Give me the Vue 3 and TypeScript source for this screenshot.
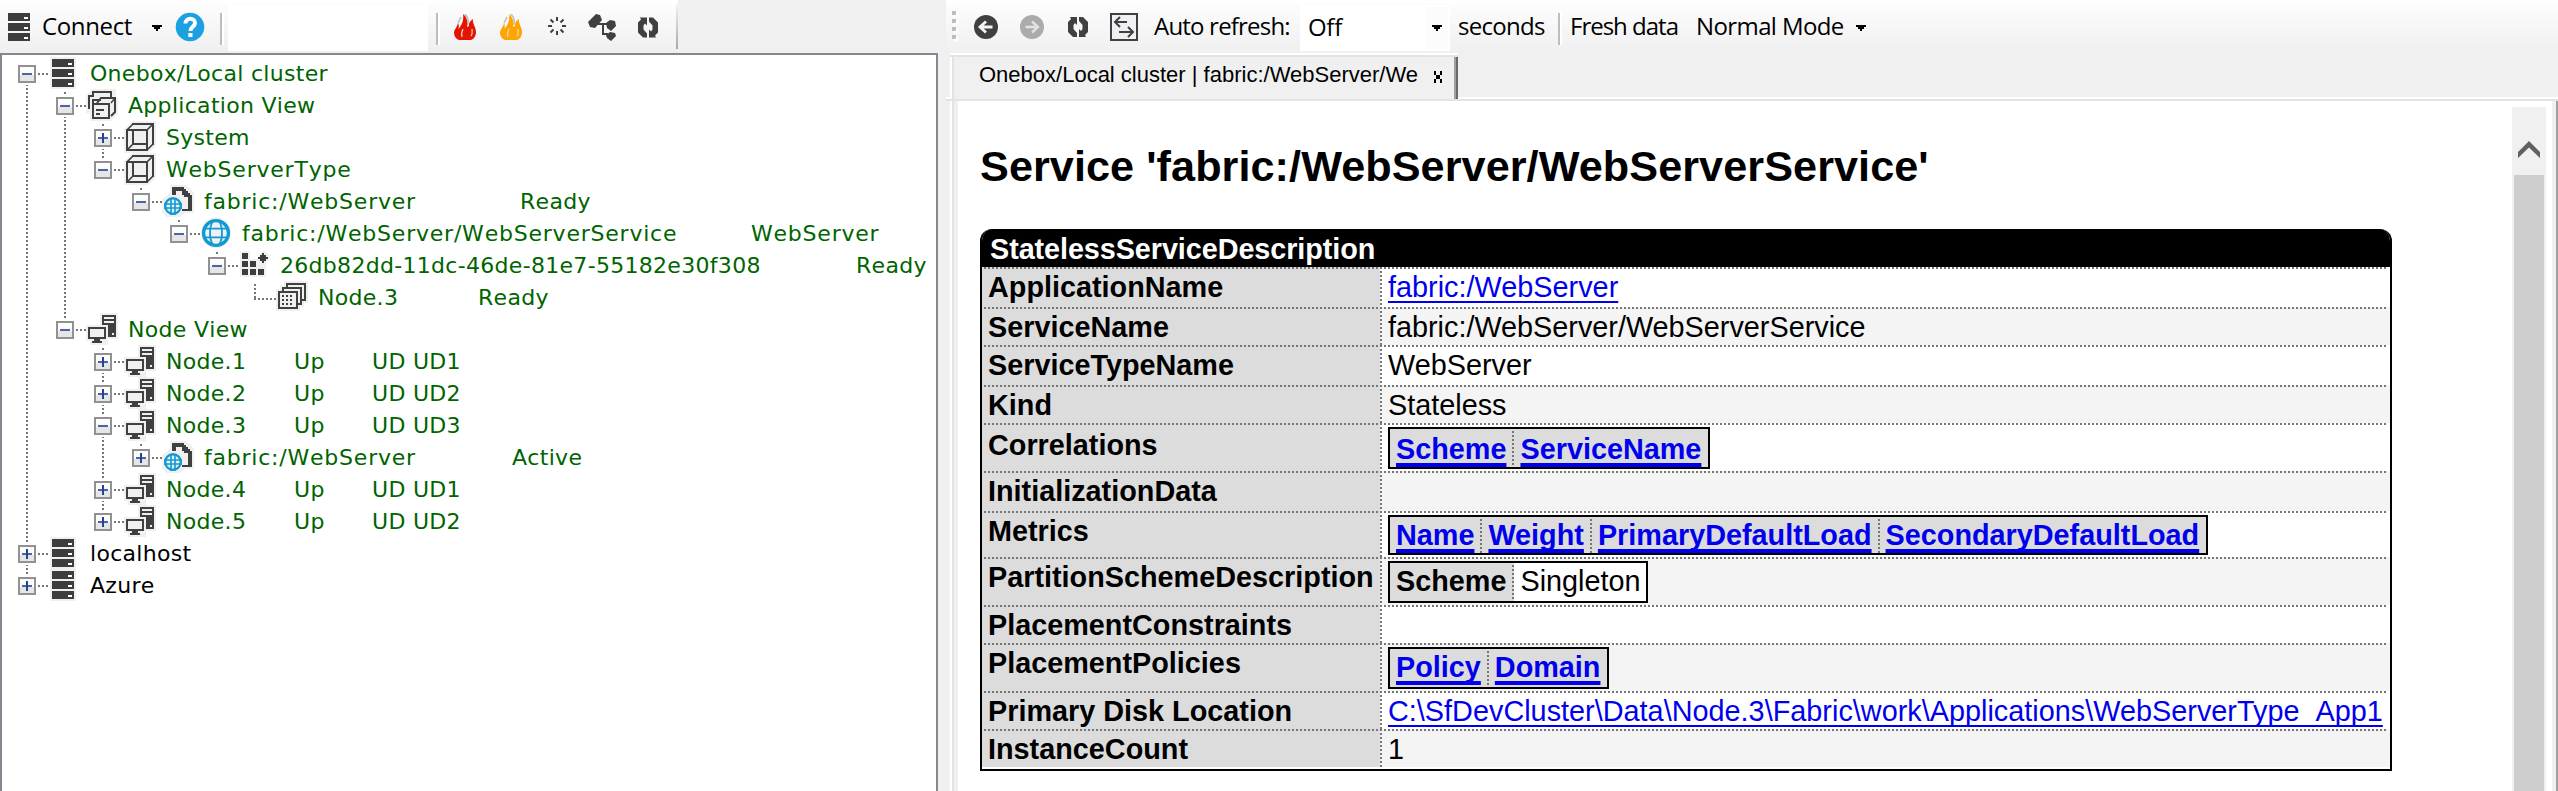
<script setup lang="ts">
type IconName = 'server' | 'apps' | 'cube' | 'doc' | 'globe' | 'partition' | 'stack' | 'pc'

interface TreeItem {
  level: number
  icon: IconName
  label: string
  box: '' | '+' | '-'
  plain?: boolean
  // text columns that follow the label, with their left edge in the panel
  cols?: { x: number; text: string }[]
}

const node = (n: number, ud: number, box: '+' | '-' = '+'): TreeItem => ({
  level: 2, icon: 'pc', label: `Node.${n}`, box,
  cols: [{ x: 294, text: 'Up' }, { x: 372, text: `UD UD${ud}` }],
})

const items: TreeItem[] = [
  { level: 0, icon: 'server', label: 'Onebox/Local cluster', box: '-' },
  { level: 1, icon: 'apps', label: 'Application View', box: '-' },
  { level: 2, icon: 'cube', label: 'System', box: '+' },
  { level: 2, icon: 'cube', label: 'WebServerType', box: '-' },
  { level: 3, icon: 'doc', label: 'fabric:/WebServer', box: '-', cols: [{ x: 520, text: 'Ready' }] },
  { level: 4, icon: 'globe', label: 'fabric:/WebServer/WebServerService', box: '-', cols: [{ x: 751, text: 'WebServer' }] },
  { level: 5, icon: 'partition', label: '26db82dd-11dc-46de-81e7-55182e30f308', box: '-', cols: [{ x: 856, text: 'Ready' }] },
  { level: 6, icon: 'stack', label: 'Node.3', box: '', cols: [{ x: 478, text: 'Ready' }] },
  { level: 1, icon: 'pc', label: 'Node View', box: '-' },
  node(1, 1), node(2, 2), node(3, 3, '-'),
  { level: 3, icon: 'doc', label: 'fabric:/WebServer', box: '+', cols: [{ x: 512, text: 'Active' }] },
  node(4, 1), node(5, 2),
  { level: 0, icon: 'server', label: 'localhost', box: '+', plain: true },
  { level: 0, icon: 'server', label: 'Azure', box: '+', plain: true },
]

function hasNext(index: number, level: number): boolean {
  for (let i = index + 1; i < items.length; i++) {
    if (items[i].level < level) return false
    if (items[i].level === level) return true
  }
  return false
}

// names in the WebServer family are set slightly looser
const isWide = (text: string): boolean => text.includes('WebServer')

const rows = items.map((item, i) => ({
  ...item,
  guides: Array.from({ length: item.level }, (_, k) => hasNext(i, k)),
  up: i > 0,
  down: hasNext(i, item.level),
  parts: (item.cols ?? []).map((c, n, all) => ({
    text: c.text,
    width: c.x - (n === 0 ? 90 + 38 * item.level : all[n - 1].x),
  })),
}))

interface Prop {
  name: string
  height: number
  text?: string
  link?: boolean
  heads?: string[]
  linked?: boolean
  value?: string
  inner?: string
}

const props: Prop[] = [
  { name: 'ApplicationName', height: 40, text: 'fabric:/WebServer', link: true },
  { name: 'ServiceName', height: 38, text: 'fabric:/WebServer/WebServerService' },
  { name: 'ServiceTypeName', height: 40, text: 'WebServer' },
  { name: 'Kind', height: 38, text: 'Stateless' },
  { name: 'Correlations', height: 48, heads: ['Scheme', 'ServiceName'], linked: true, inner: 'tall low' },
  { name: 'InitializationData', height: 40 },
  { name: 'Metrics', height: 46, heads: ['Name', 'Weight', 'PrimaryDefaultLoad', 'SecondaryDefaultLoad'], linked: true, inner: 'short' },
  { name: 'PartitionSchemeDescription', height: 48, heads: ['Scheme'], value: 'Singleton', inner: 'tall' },
  { name: 'PlacementConstraints', height: 38 },
  { name: 'PlacementPolicies', height: 48, heads: ['Policy', 'Domain'], linked: true, inner: 'tall pol' },
  { name: 'Primary Disk Location', height: 38, text: 'C:\\SfDevCluster\\Data\\Node.3\\Fabric\\work\\Applications\\WebServerType_App1', link: true },
  { name: 'InstanceCount', height: 38, text: '1' },
]
</script>

<template>
  <div class="app">
    <section class="left">
      <div class="toolbar left-bar">
        <svg class="i-server" width="22" height="28" viewBox="0 0 11 14" shape-rendering="crispEdges">
          <path fill="#3d3d3d" d="M0 0h11v4H0zM0 5h11v4H0zM0 10h11v4H0z" />
          <path fill="#fff" d="M8 2h2v1H8zM8 7h2v1H8zM8 12h2v1H8z" />
        </svg>
        <span class="t connect">Connect</span>
        <svg class="caret c1" width="10" height="6" viewBox="0 0 5 3"><path d="M0 0h5v1H4v1H3v1H2V2H1V1H0z" /></svg>
        <svg class="help" width="30" height="30" viewBox="0 0 30 30">
          <circle cx="15" cy="15" r="14.3" fill="#1ba1e2" />
          <path d="M10.5 11.5C10.5 5 20 5.500 20 11c0 3.500-4.500 3.500-4.500 8" fill="none" stroke="#fff" stroke-width="4" />
          <rect x="13.300" y="21" width="4.200" height="4" fill="#fff" />
        </svg>
        <i class="sep s1"></i>
        <div class="field"></div>
        <i class="sep s2"></i>
        <svg v-for="c in ['#e51400', '#ffa500']" :key="c" class="flame" width="22" height="26" viewBox="0 0 22 26">
          <path d="M11 0c3 3 4 7 2.500 11M4 9l3-6" fill="none" stroke="#bbb" stroke-width="1.500" />
          <path :fill="c" d="M9 0c4 3 5 8 4 13l2-1c-.5-3 1-5 4-7-1 4 3 8 3 13 0 4-2 7-5 8H5c-3-1-5-4-5-7 0-4 3-5 4-10 1 2 1 4 .5 6C8 11 10 6 9 0z" />
          <path d="M8 23c-1-3 0-6 1-8M17 22c2-2 1-5 1-7" fill="none" stroke="#e9d5cc" stroke-width="1.200" />
        </svg>
        <svg class="spin" width="18" height="18" viewBox="0 0 18 18">
          <path d="M9 0v4M9 14v4M0 9h4M14 9h4M2.500 2.500l3 3M12.500 12.500l3 3M2.500 15.500l3-3M12.500 5.500l3-3" stroke="#404040" stroke-width="2" />
        </svg>
        <svg class="hier" width="28" height="28" viewBox="0 0 28 28">
          <path d="M0 9L8 1l4 1 2 5-7 8-5-1zM18 10l4-3 5 1 1 5-5 5-4-3zM18 22l4-3 5 1 1 3-5 5-4-3z" fill="#404040" />
          <path d="M10 11h5v10h5M14 11h6" fill="none" stroke="#404040" stroke-width="2" />
        </svg>
        <svg class="refresh r1" width="20" height="21" viewBox="0 0 20 20">
          <path d="M0 5l3-3L2 0h7v8L7 6 5.500 8v4L9 16v4H5l-5-5zM20 15l-3 3 1 2h-7v-8l2 2 1.500-2V8L11 4V0h4l5 5z" fill="#404040" />
        </svg>
        <i class="bar-end"></i>
      </div>

      <div class="tree">
        <div v-for="(row, i) in rows" :key="i" class="row" :class="{ plain: row.plain }">
          <span v-for="(g, k) in row.guides" :key="k" class="guide" :class="{ on: g }"></span>
          <span class="guide joint" :class="{ up: row.up, down: row.down }">
            <i class="dash" :class="{ leaf: !row.box }"></i>
            <svg v-if="row.box" class="box" width="18" height="18" viewBox="0 0 9 9" shape-rendering="crispEdges">
              <rect width="9" height="9" fill="#919191" />
              <rect x="1" y="1" width="7" height="4" fill="#fcfcfc" />
              <rect x="1" y="5" width="7" height="3" fill="#e6e6e6" />
              <path fill="#4b63a7" d="M2 4h5v1H2z" />
              <path v-if="row.box === '+'" fill="#27448f" d="M4 2h1v5H4z" />
            </svg>
          </span>
          <svg class="icon" width="32" height="32" viewBox="0 0 16 16" shape-rendering="crispEdges">
            <template v-if="row.icon === 'server'">
              <rect x="1" width="13" height="16" fill="#f0f0f0" />
              <path fill="#3d3d3d" d="M2 1h11v4H2zM2 6h11v4H2zM2 11h11v4H2z" />
              <path fill="#fff" d="M10 3h2v1h-2zM10 8h2v1h-2zM10 13h2v1h-2z" />
            </template>
            <template v-else-if="row.icon === 'apps'">
              <path fill="#f0f0f0" d="M0 3L3 0h12v4l1 1v7l-4 4H2v-4H0z" />
              <g fill="none" stroke="#404040">
                <path d="M1.500 10V3.500h2v-2h9V4M3.500 8V5.500h4" />
                <path d="M5.500 7L7.500 4.500h7v7l-2 2" shape-rendering="auto" />
                <path d="M12.500 7l2-2.500" stroke-width=".7" shape-rendering="auto" />
                <path d="M3.500 7.500h8v7h-8zM5 10.500h4M5 12.500h2" />
              </g>
            </template>
            <template v-else-if="row.icon === 'cube'">
              <path fill="#f0f0f0" d="M0 4L4 0h12v12l-4 4H0z" />
              <g fill="none" stroke="#404040" shape-rendering="auto">
                <path d="M1.500 4.500h10v10h-10zM4.500 5v6.500H11M4 1.500h10.500V12" />
                <path d="M1.500 4.500l3-3M11.500 4.500l3-3M11.500 14.500l3-3M4.500 11.500l-3 3" stroke-width=".8" />
              </g>
            </template>
            <template v-else-if="row.icon === 'doc'">
              <path fill="#f0f0f0" d="M4 0h8l4 4v10h-5l-2 2H2l-2-2V7l4-3z" />
              <path fill="#404040" d="M5 1h6v1h1v1h1v1h1v1h1v8h-5v-1h3V6h-2V5h-1V3H7v2H5z" />
              <circle cx="5.500" cy="10.500" r="4.900" fill="#f0f0f0" />
              <circle cx="5.500" cy="10.500" r="3.900" fill="none" stroke="#0e9bd3" stroke-width="1.200" shape-rendering="auto" />
              <path stroke="#0e9bd3" d="M1 9.500h9M1 11.500h9M4.500 7v8M6.500 7v8" shape-rendering="auto" stroke-width=".8" />
            </template>
            <template v-else-if="row.icon === 'globe'">
              <g shape-rendering="auto" fill="none" stroke="#0e9bd3">
                <circle cx="8" cy="8" r="7.600" fill="#f0f0f0" stroke="none" />
                <circle cx="8" cy="8" r="6.200" stroke-width="1.700" />
                <path d="M6.500 2c-2 3-2 9 0 12M9.500 2c2 3 2 9 0 12M2 5.800h12M2 10.200h12" stroke-width=".9" />
              </g>
            </template>
            <template v-else-if="row.icon === 'partition'">
              <path fill="#f0f0f0" d="M1 1h5v4h5l-1-1 2-3h2l2 3-2 3v7H1z" />
              <path fill="#3d3d3d" d="M2 2h3v3H2zM2 6h3v3H2zM6 6h3v3H6zM2 10h3v3H2zM6 10h3v3H6zM10 10h3v3h-3zM12 2h1v1h1v1h1v1h-1v1h-1v1h-1V6h-1V5h-1V4h1V3h1z" />
            </template>
            <template v-else-if="row.icon === 'stack'">
              <path fill="#f0f0f0" d="M4 0h12v11h-2v2h-2v2H0V4h2V2h2z" />
              <path fill="none" stroke="#404040" d="M5.500 3V1.500h9v8H13M3.500 5V3.500h9v8H11M1.500 5.500h9v8h-9z" />
              <path stroke="#404040" stroke-dasharray="1 1" d="M3 7.500h6M3 9.500h6M3 11.500h6" />
            </template>
            <template v-else>
              <path fill="#f0f0f0" d="M7 0h9v13h-5v3H2v-2H0V6h7z" />
              <path fill="#404040" d="M8 1h7v11h-4V6H8zM1 7h9v7H8v1H3v-1H1z" />
              <path fill="#f0f0f0" d="M9 2h5v1H9zM9 4h5v1H9zM13 10h1v1h-1zM2 8h7v4H2zM1 13h3v1H1zM7 13h3v1H7z" />
            </template>
          </svg>
          <span v-if="row.parts.length" class="lbl" :class="{ wide: isWide(row.label) }" :style="{ width: row.parts[0].width + 'px' }">{{ row.label }}</span>
          <span v-else class="lbl" :class="{ wide: isWide(row.label) }">{{ row.label }}</span>
          <span v-for="(p, n) in row.parts" :key="n" class="lbl" :class="{ wide: isWide(p.text) }" :style="{ width: (row.parts[n + 1]?.width ?? 140) + 'px' }">{{ p.text }}</span>
        </div>
      </div>
    </section>

    <section class="right">
      <div class="toolbar right-bar">
        <svg class="grip" width="6" height="30" viewBox="0 0 6 30">
          <path fill="#fff" d="M2 2h4v4H2zM2 10h4v4H2zM2 18h4v4H2zM2 26h4v4H2z" />
          <path fill="#bdbdbd" d="M0 0h4v4H0zM0 8h4v4H0zM0 16h4v4H0zM0 24h4v4H0z" />
        </svg>
        <svg class="nav n1" width="24" height="24" viewBox="0 0 24 24">
          <circle cx="12" cy="12" r="12" fill="#404040" />
          <path d="M18.500 12H7M12 6.500L6 12l6 5.500" fill="none" stroke="#f5f5f5" stroke-width="2.800" />
        </svg>
        <svg class="nav n2" width="24" height="24" viewBox="0 0 24 24">
          <circle cx="12" cy="12" r="12" fill="#ababab" />
          <path d="M5.500 12H17M12 6.500l6 5.500-6 5.500" fill="none" stroke="#e2e2e2" stroke-width="2.400" />
        </svg>
        <svg class="refresh r2" width="20" height="20" viewBox="0 0 20 20">
          <path d="M0 5l3-3L2 0h7v8L7 6 5.500 8v4L9 16v4H5l-5-5zM20 15l-3 3 1 2h-7v-8l2 2 1.500-2V8L11 4V0h4l5 5z" fill="#404040" />
        </svg>
        <svg class="swap" width="28" height="28" viewBox="0 0 28 28">
          <rect x="1" y="1" width="26" height="26" fill="#f0f0f4" stroke="#404040" stroke-width="2" />
          <path d="M17 9H5M10 4L5 9l5 5M9 19h14M18 14l5 5-5 5" fill="none" stroke="#404040" stroke-width="2" />
        </svg>
        <span class="t auto">Auto refresh:</span>
        <div class="combo">
          <span class="t off">Off</span>
          <div class="drop"><svg width="10" height="6" viewBox="0 0 5 3"><path d="M0 0h5v1H4v1H3v1H2V2H1V1H0z" /></svg></div>
        </div>
        <span class="t secs">seconds</span>
        <i class="sep s3"></i>
        <span class="t fresh">Fresh data</span>
        <span class="t mode">Normal Mode</span>
        <svg class="caret c2" width="10" height="6" viewBox="0 0 5 3"><path d="M0 0h5v1H4v1H3v1H2V2H1V1H0z" /></svg>
      </div>

      <div class="tabs">
        <div class="tab">
          <span class="tab-name">Onebox/Local cluster | fabric:/WebServer/We</span>
          <svg class="tab-x" width="8" height="12" viewBox="0 0 4 6" shape-rendering="crispEdges"><path d="M0 0h1v2h2V0h1v2H3v2h1v2H3V4H1v2H0V4h1V2H0z" /></svg>
        </div>
      </div>

      <div class="page">
        <main class="doc">
          <h1>Service 'fabric:/WebServer/WebServerService'</h1>
          <div class="table">
            <div class="head">StatelessServiceDescription</div>
            <div v-for="(p, i) in props" :key="p.name" class="prop" :class="{ alt: i % 2 === 1 }" :style="{ height: p.height + 'px' }">
              <div class="name" :class="{ low: p.inner === 'tall low' }">{{ p.name }}</div>
              <div class="value">
                <div v-if="p.heads" class="inner" :class="p.inner">
                  <div v-for="h in p.heads" :key="h" class="cell" :class="{ linked: p.linked }"><b>{{ h }}</b></div>
                  <div v-if="p.value" class="cell single">{{ p.value }}</div>
                </div>
                <span v-else-if="p.text" :class="{ link: p.link }">{{ p.text }}</span>
              </div>
            </div>
          </div>
        </main>
        <div class="scroll">
          <svg width="22" height="17" viewBox="0 0 22 17"><path d="M0 11L11 0l11 11v6L11 6.500 0 17z" fill="#606060" /></svg>
          <div class="thumb"></div>
        </div>
      </div>
    </section>
  </div>
</template>

<style>
html, body { margin: 0; background: #f0f0f0; overflow: hidden; }
</style>

<style scoped>
.app { display: flex; width: 2558px; height: 791px; overflow: hidden; background: #f0f0f0; color: #000; }
.app svg { display: block; flex: none; }
.app * { box-sizing: border-box; }
.left { width: 938px; flex: none; display: flex; flex-direction: column; }
.right { flex: none; width: 1612px; margin-left: 8px; display: flex; flex-direction: column; }
.toolbar { height: 53px; flex: none; display: flex; align-items: flex-start; border-top: 3px solid #fff; background: linear-gradient(#fdfdfd, #f0f0f0 96%); }
.t { font: 24px/32px "Open Sans", "Noto Sans", sans-serif; white-space: nowrap; padding-top: 7px; flex: none; }
.left-bar { width: 678px; }
.i-server { margin: 10px 12px 0 8px; }
.connect { width: 110px; letter-spacing: -.35px; }
.caret { margin-top: 22px; }
.help { margin: 9px 0 0 13px; }
.sep { flex: none; width: 4px; height: 32px; margin-top: 10px; background: linear-gradient(90deg, #bdbdbd 50%, #fff 50%); }
.s1 { margin-left: 15px; }
.field { flex: none; width: 200px; height: 46px; margin: 2px 8px 0 4px; background: #fff; }
.flame { margin: 11px 0 0 14px; }
.flame + .flame { margin-left: 24px; }
.spin { margin: 14px 0 0 26px; }
.hier { margin: 10px 0 0 22px; }
.r1 { margin: 14px 0 0 22px; }
.bar-end { flex: none; width: 2px; height: 44px; margin: 2px 0 0 18px; background: linear-gradient(#f0f0f0, #a8a8a8); }

.tree { flex: 1; background: #fff; border: 2px solid #828790; border-bottom: 0; padding: 3px 0 0 6px; overflow: hidden; }
.row { display: flex; height: 32px; color: #006400; font: 22px/32px "DejaVu Sans", Verdana, sans-serif; font-kerning: none; letter-spacing: .3px; }
.row.plain { color: #000; }
.guide { position: relative; flex: none; width: 38px; height: 32px; --dots: repeating-linear-gradient(#fff 0 2px, #777 2px 4px); }
.guide.on, .guide.up.down { background: var(--dots) 18px 0 / 2px 32px no-repeat; }
.guide.up:not(.down) { background: var(--dots) 18px 0 / 2px 16px no-repeat; }
.guide.down:not(.up) { background: var(--dots) 18px 16px / 2px 16px no-repeat; }
.box { position: absolute; left: 10px; top: 7px; outline: 2px solid #fff; }
.dash { position: absolute; left: 30px; top: 15px; width: 10px; height: 2px; background: repeating-linear-gradient(90deg, #777 0 2px, #fff 2px 4px); }
.dash.leaf { left: 18px; width: 22px; top: 16px; }
.icon { margin: -1px 10px 0 2px; position: relative; }
.lbl { flex: none; white-space: pre; line-height: 31px; }
.lbl.wide { letter-spacing: .78px; }

.grip { margin: 8px 0 0 6px; }
.n1 { margin: 12px 0 0 16px; }
.n2 { margin: 12px 0 0 22px; }
.r2 { margin: 14px 0 0 24px; }
.swap { margin: 10px 0 0 22px; }
.auto { width: 146px; margin-left: 16px; letter-spacing: -.8px; }
.combo { flex: none; display: flex; width: 150px; height: 46px; margin-top: 2px; background: #fff; }
.off { width: 126px; padding: 6px 0 0 8px; letter-spacing: -.3px; }
.drop { width: 22px; height: 42px; margin-top: 2px; background: #fcfcfc; padding: 18px 0 0 6px; }
.secs { width: 100px; margin-left: 8px; letter-spacing: -.7px; }
.fresh { width: 126px; margin-left: 8px; letter-spacing: -1px; }
.mode { width: 160px; letter-spacing: -.6px; }

.tabs { height: 48px; flex: none; padding-left: 4px; display: flex; box-shadow: inset 0 -2px #e3e3e3, inset 0 -4px #fff; }
.tab { display: flex; width: 508px; height: 46px; border-top: 2px solid #fff; box-shadow: inset 0 2px #e3e3e3, inset 2px 0 #fff, inset 4px 0 #e3e3e3, inset -2px 0 #696969, inset -4px 0 #a0a0a0; background: #f0f0f0; padding-left: 29px; }
.tab-name { width: 455px; font: 22px/40px "Liberation Sans", Arial, sans-serif; white-space: nowrap; }
.tab-x { margin-top: 16px; }

.page { flex: 1; display: flex; margin-left: 4px; width: 1608px; background: #fff; border-left: 2px solid #fff; border-right: 2px solid #a0a0a0; box-shadow: inset 2px 0 #e3e3e3, inset 6px 0 #f0f0f0, inset -4px 0 #f0f0f0; overflow: hidden; }
.doc { width: 1560px; flex: none; padding: 41px 0 0 28px; font: 28.8px/36px "Liberation Sans", Arial, sans-serif; }
h1 { margin: 0 0 39px; font: bold 43.2px/48px "Liberation Sans", Arial, sans-serif; letter-spacing: .07px; white-space: nowrap; }
.table { width: 1412px; height: 542px; border: 2px solid #000; border-top: 0; border-radius: 12px 12px 0 0; overflow: hidden; background: #fff; }
.head { height: 38px; padding-left: 8px; background: #000; color: #fff; font-weight: bold; line-height: 40px; letter-spacing: -.08px; }
.prop { display: flex; background: repeating-linear-gradient(90deg, #767676 0 2px, transparent 2px 4px) 2px 0 / 1404px 2px no-repeat; }
.prop.alt { background-color: #f4f4f4; }
.name { flex: none; width: 398px; padding: 2px 0 0 6px; font-weight: bold; white-space: nowrap; background: repeating-linear-gradient(90deg, #767676 0 2px, #dcdcdc 2px 4px) 2px 0 / 1404px 2px no-repeat #dcdcdc; }
.name.low { padding-top: 4px; }
.value { flex: none; width: 1008px; padding: 2px 0 0 8px; white-space: nowrap; background: repeating-linear-gradient(#767676 0 2px, transparent 2px 4px) 0 0 / 2px 100% no-repeat; }
.link { color: #00e; text-decoration: underline; text-decoration-thickness: 2px; text-underline-offset: 4px; letter-spacing: .02px; text-decoration-skip-ink: none; }
.inner { display: flex; width: max-content; height: 42px; margin-top: 2px; border: 2px solid #000; background: #dcdcdc; line-height: 36px; }
.inner.short { height: 40px; }
.cell { padding: 0 6px; background: repeating-linear-gradient(#767676 0 2px, transparent 2px 4px) right 2px / 2px 34px no-repeat; border-right: 2px solid transparent; background-origin: border-box; }
.cell:last-child { background: none; padding-right: 7px; border-right: 0; }
.tall .cell { line-height: 37px; }
.tall.low .cell { line-height: 40px; }
.short .cell { line-height: 37px; }
.cell.single:last-child { background: #fff; padding: 0 5px 0 6px; }
.linked { color: #00e; }
.linked b { text-decoration: underline; text-decoration-thickness: 4px; text-underline-offset: 4px; text-decoration-skip-ink: none; }
.scroll { flex: none; width: 34px; margin: 6px 0 0; background: #f0f0f0; padding: 34px 0 0 6px; }
.thumb { width: 30px; height: 640px; margin: 17px 0 0 -4px; background: #cdcdcd; }
</style>
